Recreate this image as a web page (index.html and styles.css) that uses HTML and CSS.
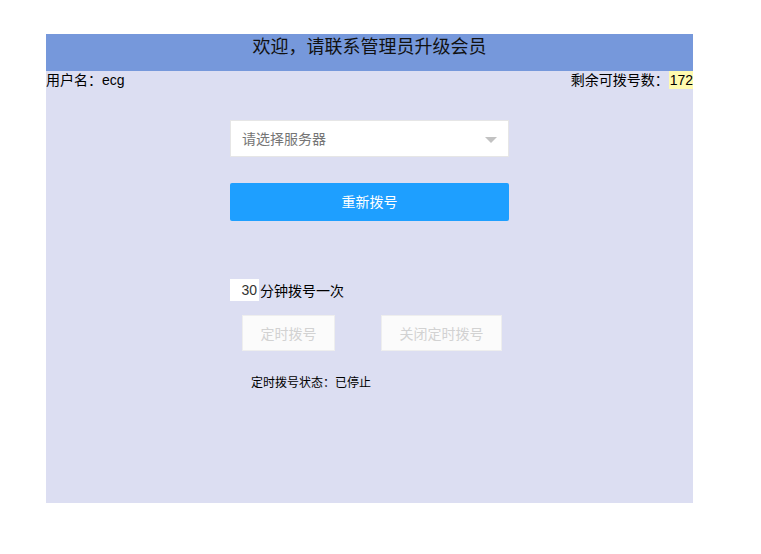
FILE: index.html
```html
<!DOCTYPE html>
<html lang="zh-CN">
<head>
    <meta charset="UTF-8">
    <title>拨号管理</title>
    <link rel="stylesheet" href="styles.css">
</head>
<body>
    <div class="main">
        <div class="header">欢迎，请联系管理员升级会员</div>
        <div class="info">
            <span>用户名：ecg</span>
            <span>剩余可拨号数：<span class="count">172</span></span>
        </div>
        <div class="form">
            <div class="select">
                <span class="placeholder">请选择服务器</span>
                <span class="arrow"></span>
            </div>
            <button class="btn-primary">重新拨号</button>
        </div>
        <div class="timer">
            <div class="timer-row">
                <input class="minutes" type="text" value="30">
                <span>分钟拨号一次</span>
            </div>
            <div class="timer-buttons">
                <button class="btn-disabled btn-start">定时拨号</button>
                <button class="btn-disabled btn-stop">关闭定时拨号</button>
            </div>
            <p class="status">定时拨号状态：已停止</p>
        </div>
    </div>
</body>
</html>
```

FILE: styles.css
```css
body {
    margin: 0;
    padding: 0;
    background: #fff;
    font-family: "Liberation Sans", "Noto Sans CJK SC", sans-serif;
    color: #000;
}
.main {
    width: 647px;
    height: 469px;
    margin: 34px 0 0 46px;
    background-color: #dcdef2;
}
.header {
    height: 37px;
    line-height: 26px;
    background-color: #7698db;
    text-align: center;
    font-size: 18px;
    color: #111;
}
.info {
    display: flex;
    justify-content: space-between;
    font-size: 14px;
    line-height: 18px;
}
.count {
    display: inline-block;
    background-color: #fffbb0;
    padding-left: 1px;
}
.form {
    width: 279px;
    margin: 31px 0 0 184px;
}
.select {
    height: 37px;
    box-sizing: border-box;
    border: 1px solid #e6e6e6;
    background-color: #fff;
    display: flex;
    align-items: center;
    justify-content: space-between;
    padding: 0 11px 2px 11px;
    font-size: 14px;
}
.placeholder {
    color: #757575;
}
.arrow {
    width: 0;
    height: 0;
    border-left: 6px solid transparent;
    border-right: 6px solid transparent;
    border-top: 6px solid #c2c2c2;
    margin-top: 4px;
}
.btn-primary {
    display: block;
    width: 279px;
    height: 38px;
    margin-top: 26px;
    padding: 0 0 2px 0;
    border: none;
    border-radius: 2px;
    background-color: #1e9fff;
    color: #fff;
    font-family: inherit;
    font-size: 14px;
    cursor: pointer;
}
.timer {
    margin: 58px 0 0 184px;
}
.timer-row {
    display: flex;
    align-items: center;
    font-size: 14px;
    height: 22px;
}
.minutes {
    width: 29px;
    height: 22px;
    box-sizing: border-box;
    border: none;
    padding: 0 2px 0 0;
    text-align: right;
    font-family: inherit;
    font-size: 14px;
    color: #333;
    background-color: #fff;
    margin-right: 1px;
}
.timer-buttons {
    display: flex;
    gap: 46px;
    margin: 14px 0 0 12px;
}
.btn-disabled {
    height: 36px;
    box-sizing: border-box;
    border: 1px solid #eee;
    background-color: #fbfbfb;
    color: #d2d2d2;
    font-family: inherit;
    font-size: 14px;
    cursor: not-allowed;
}
.btn-start {
    width: 93px;
}
.btn-stop {
    width: 121px;
}
.status {
    margin: 22px 0 0 21px;
    font-size: 12px;
}
```
